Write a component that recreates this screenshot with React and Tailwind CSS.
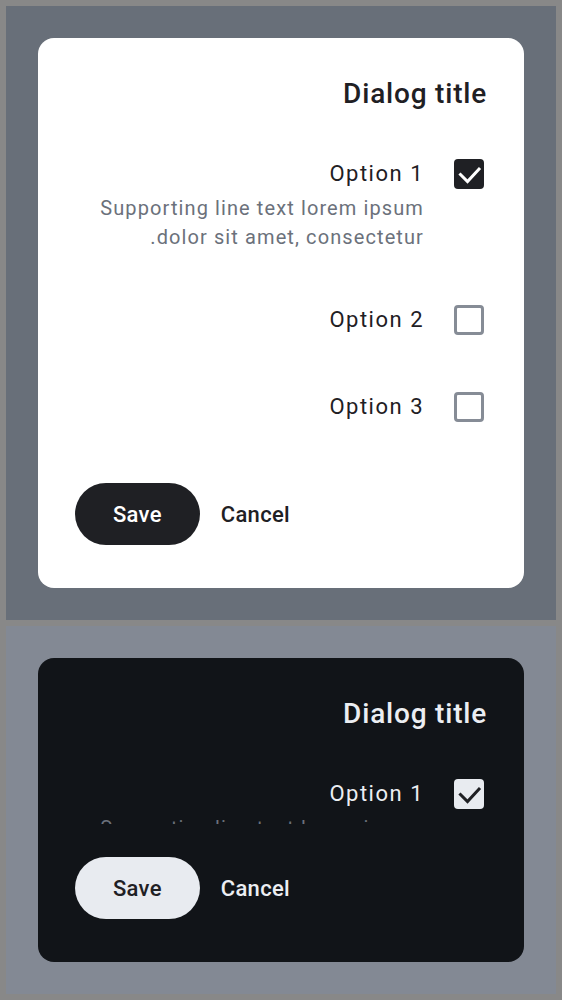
const options = [
  { id: 1, label: 'Option 1', support: 'Supporting line text lorem ipsum dolor sit amet, consectetur.', checked: true },
  { id: 2, label: 'Option 2', checked: false },
  { id: 3, label: 'Option 3', checked: false },
];

const Checkbox = ({ checked, dark }) => (
  <div className="w-9 h-[30px] flex items-center justify-center shrink-0">
    {checked ? (
      <div className={`w-[30px] h-[30px] rounded-[4px] flex items-center justify-center ${dark ? 'bg-[#e8ebf0]' : 'bg-[#1f2024]'}`}>
        <svg width="30" height="30" viewBox="0 0 30 30" fill="none">
          <path d="M6.5 15.5 L13.5 22.5 L25 10" stroke={dark ? '#1f2024' : '#ffffff'} strokeWidth="3" strokeLinecap="square" />
        </svg>
      </div>
    ) : (
      <div className={`w-[30px] h-[30px] rounded-[4px] border-[3px] ${dark ? 'border-[#9aa0aa]' : 'border-[#868c96]'}`} />
    )}
  </div>
);

const Dialog = ({ dark }) => {
  const text = dark ? 'text-[#eceef2]' : 'text-[#1f2024]';
  return (
    <div
      dir="rtl"
      className={`h-full flex flex-col rounded-2xl pt-[38px] pr-[37px] pl-[37px] pb-[43px] ${dark ? 'bg-[#111418]' : 'bg-white'}`}
    >
      <h2 className={`text-[28px] leading-[36px] font-medium tracking-[0.8px] ${text}`}>Dialog title</h2>

      <div className="flex-1 min-h-0 overflow-hidden pt-[47px]">
        {options.map((opt, i) => (
          <div
            key={opt.id}
            className={`flex items-start gap-[27px] ${i === 1 ? 'mt-[53px]' : ''} ${i === 2 ? 'mt-[57px]' : ''}`}
          >
            <Checkbox checked={opt.checked} dark={dark} />
            <div className="flex-1">
              <div className={`text-[22px] leading-[30px] tracking-[1.5px] ${text}`}>{opt.label}</div>
              {opt.support && (
                <div className="mt-[5px] text-[20px] leading-[29px] tracking-[1.1px] text-[#6b717b]">
                  Supporting line text lorem ipsum dolor sit amet, consectetur.
                </div>
              )}
            </div>
          </div>
        ))}
      </div>

      <div className="flex items-center justify-end gap-[21px] mt-[33px]">
        <button className={`text-[22px] font-medium tracking-[0.3px] ${text}`}>Cancel</button>
        <button
          className={`h-[62px] px-[38px] rounded-full text-[22px] font-medium tracking-[0.3px] ${dark ? 'bg-[#e8ebf0] text-[#1f2024]' : 'bg-[#1f2024] text-white'}`}
        >
          Save
        </button>
      </div>
    </div>
  );
};

export default function App() {
  return (
    <div className="w-[562px] h-[1000px] bg-[#888888] p-[6px] flex flex-col gap-[6px] font-['Roboto',sans-serif]">
      <div className="h-[614px] bg-[#686f79] p-8">
        <Dialog />
      </div>
      <div className="h-[368px] bg-[#838994] p-8">
        <Dialog dark />
      </div>
    </div>
  );
}
